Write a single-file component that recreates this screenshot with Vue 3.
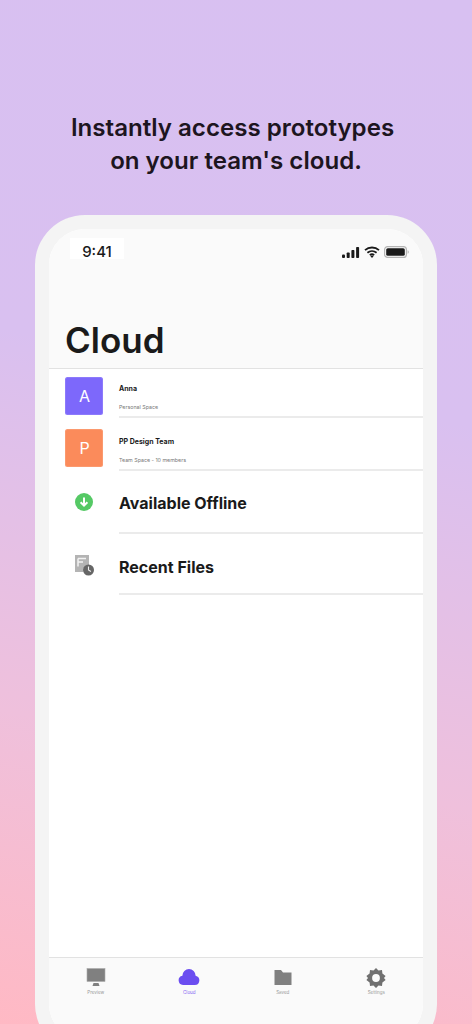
<script setup>
const tabs = [
  { label: 'Preview', key: 'preview' },
  { label: 'Cloud', key: 'cloud' },
  { label: 'Saved', key: 'saved' },
  { label: 'Settings', key: 'settings' }
]
</script>

<template>
  <div class="page">
    <h1 class="headline"><span class="line-one">Instantly access prototypes</span><span class="line-two">on your team's cloud.</span></h1>
    <div class="bezel">
      <div class="screen">
        <div class="status">
          <span class="time">9:41</span>
          <div class="status-icons">
            <svg width="18" height="11" viewBox="0 0 18 11"><rect x="0" y="7.5" width="3" height="3.5" rx="1" fill="#1a1a1a"/><rect x="4.7" y="5.5" width="3" height="5.5" rx=".8" fill="#1a1a1a"/><rect x="9.4" y="3" width="3" height="8" rx=".8" fill="#1a1a1a"/><rect x="14.1" y="0" width="3" height="11" rx=".8" fill="#1a1a1a"/></svg>
            <svg width="16" height="12" viewBox="0 0 16 12"><path d="M1 4.2C5 .6 11 .6 15 4.2M3.4 6.8c2.7-2.3 6.5-2.3 9.2 0M5.8 9.1c1.3-1 3.1-1 4.4 0" fill="none" stroke="#1a1a1a" stroke-width="1.8"/><path d="M8 12l-1.7-1.9c1-.7 2.4-.7 3.4 0z" fill="#1a1a1a"/></svg>
            <svg width="25" height="12" viewBox="0 0 25 12"><rect x=".6" y=".6" width="21.8" height="10.8" rx="3" fill="none" stroke="#b5b5b5" stroke-width="1.2"/><rect x="2.2" y="2.2" width="18.6" height="7.6" rx="1.6" fill="#1a1a1a"/><path d="M23.6 4.2c.8.3 1.2 1 1.2 1.8s-.4 1.5-1.2 1.8z" fill="#b5b5b5"/></svg>
          </div>
        </div>
        <header class="nav">
          <h2 class="title">Cloud</h2>
        </header>
        <main class="list">
          <div class="row space first">
            <div class="avatar purple">A</div>
            <div class="info">
              <div class="name">Anna</div>
              <div class="sub">Personal Space</div>
            </div>
          </div>
          <div class="row space second">
            <div class="avatar orange">P</div>
            <div class="info">
              <div class="name">PP Design Team</div>
              <div class="sub">Team Space - 10 members</div>
            </div>
          </div>
          <div class="row link offline">
            <div class="link-icon">
              <svg width="20" height="20" viewBox="0 0 20 20"><circle cx="10" cy="10" r="9" fill="#55c965"/><path d="M10 5.5v8M6.6 10.2 10 13.6l3.4-3.4" fill="none" stroke="#fff" stroke-width="2"/></svg>
            </div>
            <div class="link-text">Available Offline</div>
          </div>
          <div class="row link recent">
            <div class="link-icon">
              <svg width="22" height="22" viewBox="0 0 22 22"><path d="M1 0h14v10a5.500 5.500 0 0 0-5.800 7H1z" fill="#b4b4b4"/><path d="M4 3.500h8M4 7h5M4 3.500v8" stroke="#f2f2f2" stroke-width="1.500" fill="none"/><circle cx="14.500" cy="15" r="5.500" fill="#666"/><path d="M14.500 11.500V15l2.400 1.500" stroke="#f2f2f2" stroke-width="1.100" fill="none"/></svg>
            </div>
            <div class="link-text">Recent Files</div>
          </div>
        </main>
        <nav class="tabbar">
          <div v-for="t in tabs" :key="t.key" class="tab" :class="{ active: t.key === 'cloud' }">
            <svg v-if="t.key === 'preview'" width="20" height="20" viewBox="0 0 20 20"><rect x="1" y="0.500" width="18" height="13" fill="#808080" stroke="#aaa" stroke-width=".6"/><path d="M7.500 15h5l1 3h-7z" fill="#808080"/></svg>
            <svg v-else-if="t.key === 'cloud'" width="22" height="20" viewBox="0 0 22 20"><path d="M5 17a4.700 4.700 0 0 1-.6-9.300A6.800 6.800 0 0 1 11 1a6.800 6.800 0 0 1 6.600 6.700A4.700 4.700 0 0 1 16.800 17z" fill="#6b4df0"/></svg>
            <svg v-else-if="t.key === 'saved'" width="18" height="20" viewBox="0 0 18 20"><path d="M.5 2h6.500l2 2.500h8.500v12.500H.5z" fill="#808080"/></svg>
            <svg v-else width="20" height="20" viewBox="0 0 20 20"><path d="M10 0l2.500 2.400 3.500-.3.400 3.500L19.600 8 18 10l1.600 2-3.200 2.400-.4 3.500-3.500-.3L10 20l-2.500-2.400-3.500.3-.4-3.500L.4 12 2 10 .4 8l3.200-2.400.4-3.500 3.500.3z" fill="#707070"/><circle cx="10" cy="10" r="3.900" fill="#fafafa"/></svg>
            <span class="tab-label">{{ t.label }}</span>
          </div>
        </nav>
      </div>
    </div>
  </div>
</template>

<style>
html, body { margin: 0; padding: 0; }
</style>

<style scoped>
.page {
  width: 472px;
  height: 1024px;
  overflow: hidden;
  box-sizing: border-box;
  padding-top: 111px;
  background: linear-gradient(192deg, #d8c0f1 0%, #d9c0f0 38%, #efc0dc 72%, #ffb9c4 100%);
  display: flex;
  flex-direction: column;
  align-items: center;
  font-family: Inter, "Liberation Sans", sans-serif;
  color: #1a1a1a;
}
.headline {
  margin: 0;
  height: 66px;
  width: 100%;
  font-family: Inter, "Liberation Sans", sans-serif;
  font-size: 24.100px;
  line-height: 33px;
  font-weight: 600;
  text-align: center;
  color: #1d1520;
  white-space: nowrap;
}
.line-one { display: block; padding-right: 7px; }
.line-two { display: block; }
.bezel {
  margin-top: 38px;
  width: 402px;
  height: 839px;
  flex: none;
  box-sizing: border-box;
  padding: 14px;
  background: #f4f4f4;
  border-radius: 50px;
}
.screen {
  height: 811px;
  background: #fff;
  border-radius: 36px;
  overflow: hidden;
  display: flex;
  flex-direction: column;
}
.status {
  height: 55px;
  box-sizing: border-box;
  background: #fafafa;
  display: flex;
  justify-content: space-between;
  align-items: flex-start;
  padding: 9px 14px 0 21px;
}
.time {
  width: 54px;
  height: 21px;
  box-sizing: border-box;
  padding-top: 7px;
  background: #fff;
  font-size: 15px;
  font-weight: 500;
  line-height: 14px;
  text-align: center;
}
.status-icons {
  display: flex;
  align-items: center;
  gap: 4px;
  padding-top: 8px;
}
.nav {
  height: 84px;
  box-sizing: content-box;
  background: #fafafa;
  border-bottom: 1px solid #e2e2e2;
}
.title {
  margin: 0;
  padding: 34px 0 0 16px;
  font-family: Inter, "Liberation Sans", sans-serif;
  font-size: 35px;
  line-height: 44px;
  font-weight: 600;
  color: #1a1a1a;
}
.list { flex: 1; background: #fff; }
.row { display: flex; }
.space { padding-left: 16px; box-sizing: border-box; }
.first { height: 49px; }
.second { height: 53px; }
.avatar {
  width: 38px;
  height: 38px;
  border-radius: 2.500px;
  flex: none;
  color: #fff;
  font-size: 16px;
  line-height: 38px;
  text-align: center;
  padding-left: 1px;
  box-sizing: border-box;
  box-shadow: inset 0 0 0 1px rgba(255, 255, 255, 0.12);
}
.first .avatar { margin-top: 8px; }
.second .avatar { margin-top: 11px; }
.purple { background: #7d68fb; }
.orange { background: #fb8b5b; }
.info {
  flex: 1;
  margin-left: 16px;
  border-bottom: 2px solid #ebebeb;
  box-sizing: border-box;
  padding-bottom: 5px;
  display: flex;
  flex-direction: column;
  justify-content: flex-end;
}
.name { font-size: 7px; font-weight: 700; line-height: 11px; color: #1a1a1a; }
.sub { font-size: 5.300px; line-height: 8px; color: #777; margin-top: 9px; }
.link { padding-left: 25px; }
.offline { height: 63px; }
.recent { height: 61px; }
.link-icon { width: 20px; flex: none; }
.offline .link-icon { margin-top: 21px; }
.recent .link-icon { margin-top: 21px; }
.link-text {
  flex: 1;
  margin-left: 25px;
  font-size: 16px;
  font-weight: 700;
  line-height: 20px;
  box-sizing: border-box;
  border-bottom: 2px solid #ebebeb;
}
.offline .link-text { padding-top: 22px; }
.recent .link-text { padding-top: 23px; }
.tabbar {
  height: 82px;
  flex: none;
  background: #fafafa;
  border-top: 1px solid #e2e2e2;
  display: grid;
  grid-template-columns: repeat(4, 1fr);
}
.tab {
  display: flex;
  flex-direction: column;
  align-items: center;
  padding-top: 10px;
  color: #999;
}
.tab.active { color: #7e63f2; }
.tab-label { font-size: 4.500px; line-height: 6px; margin-top: 2px; }
</style>
